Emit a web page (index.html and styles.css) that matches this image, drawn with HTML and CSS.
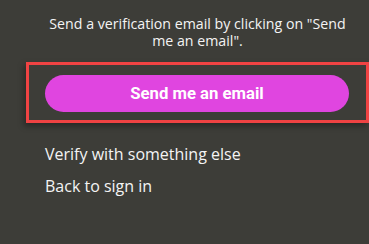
FILE: index.html
```html
<!DOCTYPE html>
<html lang="en">
<head>
    <meta charset="UTF-8">
    <link rel="stylesheet" href="styles.css">
    <title>Verify</title>
</head>
<body>
    <div class="panel">
        <p class="intro">Send a verification email by clicking on "Send me an email".</p>
        <div class="highlight">
            <button class="send-button">Send me an email</button>
        </div>
        <div class="links">
            <a href="#" class="link">Verify with something else</a>
            <a href="#" class="link">Back to sign in</a>
        </div>
    </div>
</body>
</html>
```

FILE: styles.css
```css
*{
    margin: 0;
    padding: 0;
    box-sizing: border-box;
}
html, body{
    height: 100%;
}
body{
    background-color: #3d3d38;
    font-family: "Open Sans", "Noto Sans", sans-serif;
    color: #f4f4f4;
    overflow: hidden;
}
.panel{
    margin-left: 26px;
    width: 343px;
    padding-top: 15px;
}
.intro{
    font-size: 14.2px;
    line-height: 17px;
    text-align: center;
    padding: 0 20px;
}
.highlight{
    margin-top: 13px;
    border: 3px solid #f04343;
    padding: 10px 16px 8px 16px;
    box-shadow: -2px 3px 6px rgba(0, 0, 0, .35);
}
.send-button{
    display: block;
    width: 304px;
    height: 37px;
    border: none;
    border-radius: 19px;
    background-color: #e045e0;
    color: #fff;
    font-family: Roboto, "Liberation Sans", sans-serif;
    font-weight: bold;
    font-size: 16.7px;
    cursor: pointer;
}
.links{
    display: flex;
    flex-direction: column;
    gap: 9px;
    padding: 20px 0 0 19px;
}
.link{
    color: #f4f4f4;
    text-decoration: none;
    font-size: 16px;
    line-height: 23px;
}
```
